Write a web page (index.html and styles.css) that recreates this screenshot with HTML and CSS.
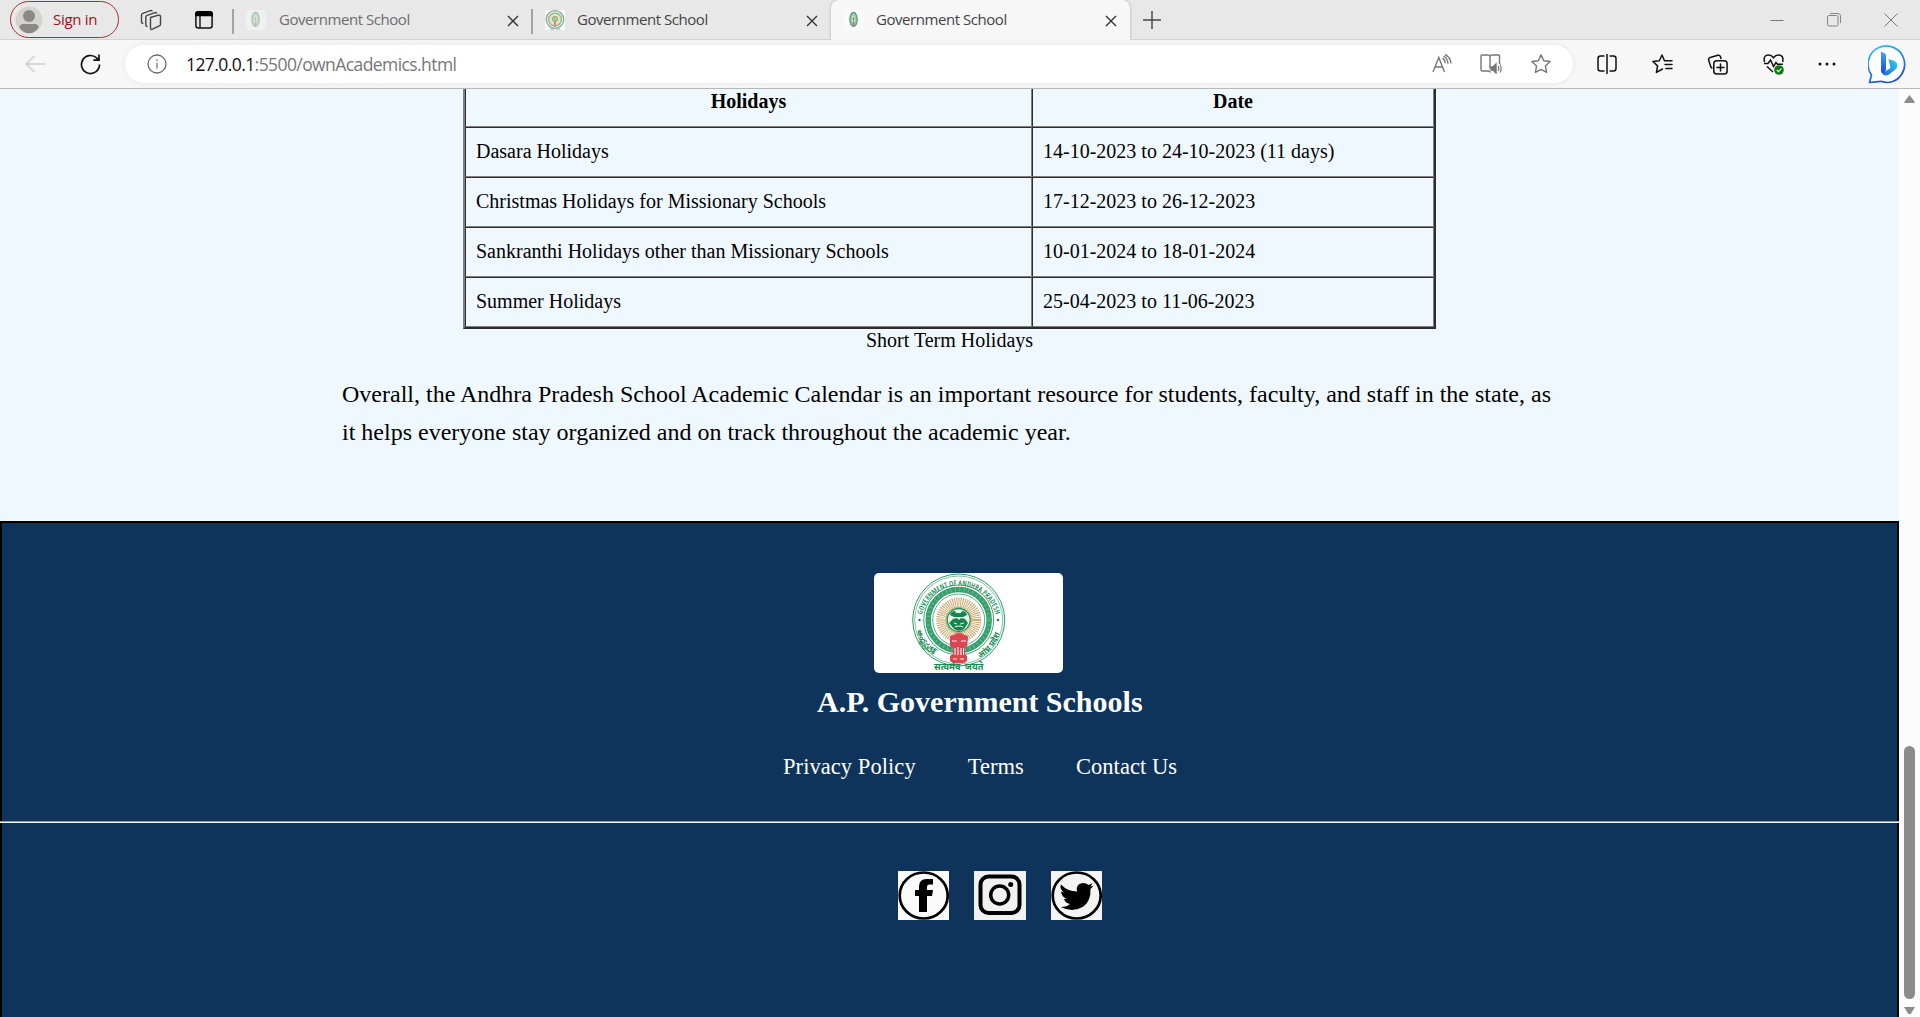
FILE: index.html
```html
<!DOCTYPE html>
<html lang="en">
<head>
<meta charset="utf-8">
<title>Government School</title>
<link rel="stylesheet" href="styles.css">
</head>
<body>
<svg class="defs" width="0" height="0" aria-hidden="true">
  <symbol id="close" viewBox="0 0 12 12"><path d="M1 1l10 10M11 1L1 11" fill="none" stroke="currentColor" stroke-width="1.4"/></symbol>
  <symbol id="seal" viewBox="0 0 20 20">
    <circle cx="10" cy="9.5" r="8.8" fill="#e8f0e6" stroke="#7fae98" stroke-width="1.2"/>
    <circle cx="10" cy="9.5" r="6.4" fill="#efe3b0" stroke="#8fb5a0" stroke-width="1.4"/>
    <circle cx="10" cy="9" r="2.7" fill="#a9c7a0" stroke="#6f9f86" stroke-width=".7"/>
    <path d="M9 12h2v5H9z" fill="#d98a80"/><path d="M5 19h4M11 19h4" stroke="#7fae98"/>
  </symbol>
  <symbol id="slim-seal" viewBox="0 0 20 20">
    <ellipse cx="9.5" cy="9.5" rx="3.6" ry="7" fill="#9fccb6" stroke="#4fa584" stroke-width="1.4"/>
    <ellipse cx="9.5" cy="9" rx="1.6" ry="3.5" fill="#e2d9a6"/>
    <ellipse cx="9.5" cy="8.8" rx=".8" ry="1.6" fill="#3f9b75"/>
    <path d="M8.8 11.5h1.5v4H8.800z" fill="#d9605a"/>
  </symbol>
</svg>

<header class="browser">
  <div class="tabstrip">
    <div class="profile">
      <svg width="28" height="28" viewBox="0 0 28 28"><circle cx="14" cy="14" r="13.500" fill="#d4d2ce"/><circle cx="14" cy="10" r="6" fill="#8b8886"/><path d="M4.500 21.500q0-3.500 3.500-3.500h12q3.500 0 3.500 3.500Q20 27.300 14 27.300T4.500 21.500z" fill="#8b8886"/></svg>
      <span>Sign in</span>
    </div>
    <svg class="workspaces" width="22" height="22" viewBox="0 0 22 22" fill="none" stroke="#444" stroke-width="1.4" stroke-linejoin="round"><path d="M10.500 8.500l8-2.300q2-.5 2 1.500v7.500q0 1.300-1.200 1.700l-6.800 3.300q-2 .8-2-1.200z"/><path d="M7.500 17.500q-1.700 0-1.700-1.800V8.200q0-1.400 1.300-1.900l8-2.700q1.400-.3 1.700 1"/><path d="M3.300 14.500q-1.800 0-1.800-1.800V6.200q0-1.400 1.300-1.900l7.500-2.700q1.600-.5 2 .8"/></svg>
    <svg class="tab-actions" width="18" height="18" viewBox="0 0 18 18"><rect x=".9" y=".9" width="16.200" height="16.200" rx="2.500" fill="none" stroke="#111" stroke-width="1.500"/><path d="M0 5.300V3q0-3 3-3h12q3 0 3 3v2.300z" fill="#000"/><path d="M5 5v12" stroke="#111" stroke-width="1.400"/></svg>
    <i class="divider"></i>
    <div class="tab first faded">
      <svg class="favicon" width="20" height="20"><use href="#slim-seal"/></svg>
      <span>Government School</span>
      <svg class="x" width="12" height="12"><use href="#close"/></svg>
    </div>
    <i class="divider second"></i>
    <div class="tab middle">
      <svg class="favicon" width="20" height="20"><use href="#seal"/></svg>
      <span>Government School</span>
      <svg class="x" width="12" height="12"><use href="#close"/></svg>
    </div>
    <div class="tab active">
      <svg class="favicon" width="20" height="20"><use href="#slim-seal"/></svg>
      <span>Government School</span>
      <svg class="x" width="12" height="12"><use href="#close"/></svg>
    </div>
    <svg class="new-tab" width="18" height="18" viewBox="0 0 18 18" stroke="#444" stroke-width="1.400"><path d="M9 0v18M0 9h18"/></svg>
    <div class="window-controls">
      <svg width="14" height="14" viewBox="0 0 14 14"><path d="M0.500 7.500h13" stroke="#777"/></svg>
      <svg width="14" height="14" viewBox="0 0 14 14" fill="none" stroke="#858585"><rect x=".5" y="2.500" width="10.500" height="10.500" rx="1.500"/><path d="M3 .5h8q2.500 0 2.500 2.500v7"/></svg>
      <svg width="14" height="14" viewBox="0 0 14 14" stroke="#777" stroke-width="1"><path d="M.5.5l13 13M13.500.5l-13 13"/></svg>
    </div>
  </div>
  <div class="toolbar">
    <svg class="back" width="20" height="18" viewBox="0 0 20 18" fill="none" stroke="#cfcfcf" stroke-width="1.400"><path d="M20 9H1M9.500 .8L1 9l8.500 8.200"/></svg>
    <svg class="reload" width="21" height="21" viewBox="0 0 21 21" fill="none" stroke="#111" stroke-width="1.700"><path d="M19.500 10.500a9 9 0 1 1-2.900-6.600L18.500 5.700M19 .5v5.700h-5.700"/></svg>
    <div class="address">
      <svg class="info" width="20" height="20" viewBox="0 0 20 20" fill="none" stroke="#6b6b6b" stroke-width="1.300"><circle cx="10" cy="10" r="9"/><path d="M10 8.800v5.700" stroke-width="1.200"/><circle cx="10" cy="6" r=".5" fill="#6b6b6b" stroke-width=".7"/></svg>
      <span class="url"><b>127.0.0.1</b>:5500/ownAcademics.html</span>
      <svg class="tool-read" width="20" height="20" viewBox="0 0 20 20" fill="none" stroke="#767676" stroke-width="1.400"><path d="M1 18L6.800 3.500 12.500 18M3 13h7.700M10.500 4.200q2.600 1.500 2.700 5M11.500 2q4.300 2.500 4.500 7.700M13 .5q5.500 2.600 6 9" /></svg>
      <svg class="tool-book" width="22" height="20" viewBox="0 0 22 20" fill="none" stroke="#767676" stroke-width="1.400"><path d="M10 2v12.500M10 3Q10 1 8 1H2Q1 1 1 2v14q0 1 1 1h6q2 0 2.300 1.500M10 3q0-2 2-2h6.500q1 0 1 1v8"/><path d="M11 13h2l3-3v9l-3-3h-2z" fill="#767676"/><path d="M18 12q1.600 2.500 0 5M20 10.500q2.400 4 0 8" stroke-width="1.200"/></svg>
      <svg class="tool-star" width="20" height="20" viewBox="0 0 20 20" fill="none" stroke="#767676" stroke-width="1.400" stroke-linejoin="round"><path d="M10 .9l2.700 5.800 6.400.8-4.700 4.400 1.200 6.500L10 15.300l-5.600 3.100 1.200-6.500L.9 7.500l6.400-.8z"/></svg>
    </div>
    <div class="tools">
      <svg width="20" height="20" viewBox="0 0 20 20" fill="none" stroke="#111" stroke-width="1.500"><path d="M7.500 2H3.500Q1 2 1 4.500v10Q1 17 3.500 17h4M12.500 2h4Q19 2 19 4.500v10q0 2.500-2.500 2.500h-4M10 0v20"/></svg>
      <svg width="21" height="20" viewBox="0 0 21 20" fill="none" stroke="#111" stroke-width="1.500" stroke-linejoin="round" stroke-linecap="round"><path d="M12.500 6.800L10 1 7.300 6.700.9 7.500l4.700 4.400-1.200 6.500L10.500 15M12.500 6.800H20M13 10.500h7M14 14.500h6"/></svg>
      <svg width="21" height="21" viewBox="0 0 21 21" fill="none" stroke="#111" stroke-width="1.500" stroke-linecap="round"><rect x="6.800" y="6.800" width="13.300" height="13.300" rx="3"/><path d="M13.500 10v7M10 13.500h7M14 4.500l-.5-1.700q-.7-2-2.700-1.500L3.200 3.500q-2 .6-1.600 2.600L3.700 12.500q.3 1 1.200 1.500"/></svg>
      <svg width="21" height="21" viewBox="0 0 21 21" fill="none" stroke="#111" stroke-width="1.500"><path d="M1.500 8Q0 1 5.500 1 8.500 1 10.500 3.700 12.500 1 15.500 1 21 1 19.700 8M1 9.500h4L7.500 6l3 6.500 2.500-4 1.500 1.700h5.500M4 12.500l6 5.500"/><circle cx="16" cy="16" r="4.800" fill="#0f7b0f" stroke="none"/><path d="M13.800 16l1.700 1.700 2.800-3" stroke="#fff" stroke-width="1.200"/></svg>
      <svg width="18" height="20" viewBox="0 0 18 20" fill="#111"><circle cx="2" cy="10" r="1.500"/><circle cx="9" cy="10" r="1.500"/><circle cx="16" cy="10" r="1.500"/></svg>
    </div>
    <svg class="bing" width="40" height="40" viewBox="0 0 40 40"><defs><linearGradient id="bubble" x1="0" y1="0" x2=".4" y2="1"><stop offset="0" stop-color="#28c9f0"/><stop offset=".6" stop-color="#2b82ea"/><stop offset="1" stop-color="#1a52d6"/></linearGradient><linearGradient id="stem" x1="0" y1="0" x2="0" y2="1"><stop offset="0" stop-color="#40a8f8"/><stop offset="1" stop-color="#1748dc"/></linearGradient><linearGradient id="bowl" x1="0" y1="1" x2="1" y2="0"><stop offset="0" stop-color="#1b60e8"/><stop offset="1" stop-color="#30d7ee"/></linearGradient></defs><path d="M1.500 38.500l2-7.500A18.300 18.300 0 1 1 20 38.500q-4 0-7-1.200Q8 37.500 1.500 38.500z" fill="#fff" stroke="url(#bubble)" stroke-width="1.700" stroke-linejoin="round"/><path d="M20.500 15l6 2q4.500 2.500 2 7.500L21 30.500q-4 2.500-7-1l8.500-5.500z" fill="url(#bowl)"/><path d="M13 7.500l3.500 1.800q1.500.7 1.500 2.500V26l-2.500 3.500q-2.500 0-2.500-3z" fill="url(#stem)"/></svg>
  </div>
</header>

<div class="viewport">
  <div class="page">
    <main>
      <table class="holidays">
        <caption>Short Term Holidays</caption>
        <tr><th class="name">Holidays</th><th>Date</th></tr>
        <tr><td>Dasara Holidays</td><td>14-10-2023 to 24-10-2023 (11 days)</td></tr>
        <tr><td>Christmas Holidays for Missionary Schools</td><td>17-12-2023 to 26-12-2023</td></tr>
        <tr><td>Sankranthi Holidays other than Missionary Schools</td><td>10-01-2024 to 18-01-2024</td></tr>
        <tr><td>Summer Holidays</td><td>25-04-2023 to 11-06-2023</td></tr>
      </table>
      <p class="summary">Overall, the Andhra Pradesh School Academic Calendar is an important resource for students, faculty, and staff in the state, as<br>it helps everyone stay organized and on track throughout the academic year.</p>
    </main>
    <footer>
      <div class="about">
        <div class="logo">
          <svg width="189" height="100" viewBox="0 0 189 100">
            <defs><path id="arc-top" d="M47.200 50A37.500 37.500 0 1 1 122.200 50"/><path id="arc-left" d="M42.500 56A43 43 0 0 0 66 86"/><path id="arc-right" d="M105 85.500A43 43 0 0 0 127 56"/></defs>
            <g fill="none" stroke="#2a9a63"><circle cx="84.700" cy="47" r="46" stroke-width="1"/><circle cx="84.700" cy="47" r="44" stroke-width=".6"/><circle cx="84.700" cy="47" r="35" stroke-width=".9"/><circle cx="84.700" cy="47" r="30.500" stroke-width="5.500" stroke="#35a06c"/><circle cx="84.700" cy="47" r="30.500" stroke-width="3" stroke="#6fbd97" stroke-dasharray="1 3.500"/><circle cx="84.700" cy="47" r="26" stroke-width=".8"/></g>
            <circle cx="84.700" cy="47" r="17.500" fill="none" stroke="#cdab72" stroke-width="10" stroke-dasharray="1 .9"/>
            <circle cx="84.700" cy="47" r="12.800" fill="#fff" stroke="#c7a064"/><circle cx="84.700" cy="47" r="11.500" fill="#e6f4ea" stroke="#1d9158" stroke-width="1.300"/>
            <path d="M76 42q1-4 5-4l1 2h5l1-2q4 0 5 4l-4 2H80z M79 46l4-1 2 2 2-2 4 1 3 4-4 6q-5 3-10 0l-5-6z" fill="#16854e"/><path d="M80 50l3 1M86 51l4-1M81 54q4-2 8 0" stroke="#e6f4ea" stroke-width="1.200" fill="none"/>
            <path d="M76 66q-1-4 4-4 1-2 5-2t5 2q5 0 4 4l-1 7-2 2v6l2 2v5l-3 2H80l-4-2v-5l3-2v-6l-3-2z" fill="#dc4650"/><path d="M81 75v7M84 74v8M87 75v7M89.500 75v7" stroke="#fff" stroke-width="1"/><path d="M78 68h5M87 68h5M79 86h4M86 86h4" stroke="#f4b5b5" stroke-width="1.500"/>
            <g class="seal-text"><text class="seal-latin" font-size="7.300" letter-spacing=".15"><textPath href="#arc-top" startOffset="50%" text-anchor="middle">GOVERNMENT OF ANDHRA PRADESH</textPath></text><text font-size="7.500"><textPath href="#arc-left" startOffset="2">ఆంధ్రప్రదేశ్</textPath></text><text font-size="8"><textPath href="#arc-right" startOffset="1">आंध्र प्रदेश</textPath></text><circle cx="45.500" cy="47" r="1.200"/><circle cx="124" cy="47" r="1.200"/><text x="60" y="97" font-size="9" word-spacing="2">सत्यमेव जयते</text></g>
          </svg>
        </div>
        <h2>A.P. Government Schools</h2>
        <nav><a>Privacy Policy</a><a>Terms</a><a>Contact Us</a></nav>
      </div>
      <div class="rule"></div>
      <div class="social">
        <svg width="51" height="49" viewBox="0 0 51 49"><rect width="51" height="49" fill="#fafafa"/><ellipse cx="25.700" cy="24.500" rx="24" ry="23" fill="none" stroke="#000" stroke-width="2.700"/><path d="M35 8h-6.500q-7.500 0-7.500 7.500V19h-4v6h4v16h8V25h5l1-6h-6v-3q0-2.500 2.500-2.500H35z"/></svg>
        <svg width="52" height="49" viewBox="0 0 52 49"><rect width="52" height="49" fill="#f1f1f1"/><g fill="none" stroke="#000"><rect x="6.500" y="5.500" width="39" height="36.500" rx="8" stroke-width="4"/><circle cx="25.700" cy="24" r="9" stroke-width="3.500"/></g><circle cx="36.700" cy="13.500" r="2.500"/></svg>
        <svg width="51" height="49" viewBox="0 0 51 49"><rect width="51" height="49" fill="#f4f4f4"/><ellipse cx="25.700" cy="24.500" rx="24" ry="23" fill="none" stroke="#000" stroke-width="2.700"/><path d="M10 13.500q6.500 7 16 7-1.500-8 6-8.500 3.500 0 5.500 2l4-1.800-2 3.300 3-.7-3 3.200Q40 30 32.500 35.500 22 42 9.500 36q6 .2 9.500-3-5-1-6-5l2.800-.2Q10.500 26 10 20.500l3 .9q-5-4-3-7.900z"/></svg>
      </div>
    </footer>
  </div>
  <div class="scrollbar"><i class="up"></i><i class="thumb"></i><i class="down"></i></div>
</div>
</body>
</html>
```
FILE: styles.css
```css
* { box-sizing: border-box; }
body { margin: 0; width: 1920px; height: 1017px; overflow: hidden; display: flex; flex-direction: column; }
svg { display: block; flex: none; }
.defs { position: absolute; }

.browser { font-family: "Open Sans", "Noto Sans", sans-serif; height: 89px; flex: none; background: #f7f7f7; border-bottom: 1px solid #b8b8b8; }
.tabstrip { height: 40px; display: flex; align-items: center; background: #e8e8e8; box-shadow: inset 0 -1px #d3d3d3; }
.profile { width: 109px; height: 37px; margin: 1px 0 2px 10px; padding-left: 4px; display: flex; align-items: center; gap: 10px; border: 1.5px solid #ac2b31; border-radius: 19px; color: #9b1119; font-size: 15px; letter-spacing: -.3px; white-space: nowrap; }
.profile span, .tab span { padding-bottom: 2px; }
.workspaces { margin-left: 21px; }
.tab-actions { margin-left: 33px; }
.divider { width: 2px; height: 25px; margin: 2px 0 0 19px; background: #a3a3a3; }
.tab { height: 40px; display: flex; align-items: center; font-size: 15px; letter-spacing: -.45px; color: #444; white-space: nowrap; }
.favicon { background: #fbfbfb; }
.tab span { margin-left: 13px; width: 228px; }
.tab .x { color: #333; margin-top: 1px; }
.first { margin-left: 12px; }
.faded span { color: #6d6d6d; }
.faded .favicon { opacity: .45; }
.divider.second { margin-left: 12px; }
.middle { margin-left: 12px; }
.middle span { margin-left: 12px; width: 229px; }
.active { width: 299px; margin-left: 13px; padding-left: 13px; background: #f7f7f7; border-radius: 8px 8px 0 0; box-shadow: 0 0 3px #aaa; clip-path: inset(0 -4px 0 -4px); }
.active span { margin-left: 12px; width: 229px; }
.new-tab { margin-left: 13px; }
.window-controls { display: flex; gap: 43px; margin-left: auto; padding-right: 22px; }

.toolbar { height: 48px; display: flex; align-items: center; }
.back { margin-left: 25px; }
.reload { margin-left: 35px; }
.address { width: 1448px; height: 38px; margin-left: 24px; padding-left: 22px; display: flex; align-items: center; background: #fff; border-radius: 19px; box-shadow: 0 0 5px #e5e5e5; }
.url { width: 1246px; margin-left: 19px; padding-bottom: 1px; color: #777; font-size: 17.5px; letter-spacing: -.58px; white-space: nowrap; }
.url b { color: #111; font-weight: 400; }
.tool-book { margin-left: 28px; }
.tool-star { margin-left: 29px; }
.tools { display: flex; align-items: center; gap: 34.6px; margin-left: 24px; }
.bing { margin-left: 32px; }

.viewport { display: flex; flex: 1; min-height: 0; }
.page { width: 1899px; overflow: hidden; background: #f0f8ff; font-family: "Liberation Serif", "Times New Roman", serif; }
main { height: 432px; overflow: hidden; color: #000; }
.holidays { width: 973px; margin: -12px 0 0 463px; table-layout: fixed; border-spacing: 0; border: 0 solid #2c2c2c; border-width: 0 2px 2px; border-left-color: #808080; font-size: 20px; }
.holidays caption { caption-side: bottom; line-height: 23px; }
.holidays td, .holidays th { height: 50px; padding: 0 10px 1px; border: 1px solid #2c2c2c; border-right-color: #808080; border-bottom-color: #808080; }
.holidays .name { width: 567px; }
.summary { margin: 23px 0 0 342px; font-size: 24px; line-height: 38px; white-space: nowrap; }

footer { height: 520px; border: 2px solid #000; border-bottom: 0; background: #0f345b; color: #fff; }
.about { height: 298px; padding-top: 50px; }
.logo { width: 189px; margin-left: 872px; border-radius: 5px; overflow: hidden; background: #fff; }
.seal-text { fill: #168a50; font-family: "Liberation Sans", "Noto Sans", sans-serif; font-weight: 700; }
.seal-latin { font-family: "Open Sans", sans-serif; font-weight: 600; font-stretch: 75%; }
h2 { margin: 12px 0 0 815px; font-size: 30px; line-height: 34px; white-space: nowrap; }
nav { display: flex; gap: 52px; margin: 35px 0 0 781px; font-size: 22.500px; letter-spacing: .06px; line-height: 26px; white-space: nowrap; }
.rule { height: 2px; margin: 0 -2px; background: #f4f4f4; border-top: 1px solid #9a9a9a; }
.social { display: flex; margin: 48px 0 0 896px; gap: 25px; }

.scrollbar { width: 21px; padding: 6px 5px 3px; display: flex; flex-direction: column; background: #fcfcfc; }
.scrollbar i { width: 11px; flex: none; background: #8b8b8b; }
.up { height: 8px; clip-path: polygon(50% 0, 100% 90%, 90% 100%, 10% 100%, 0 90%); }
.thumb { height: 253px; margin-top: 643px; border-radius: 6px; }
.down { height: 7px; margin-top: 8px; clip-path: polygon(0 0, 100% 0, 60% 100%, 40% 100%); }
```
